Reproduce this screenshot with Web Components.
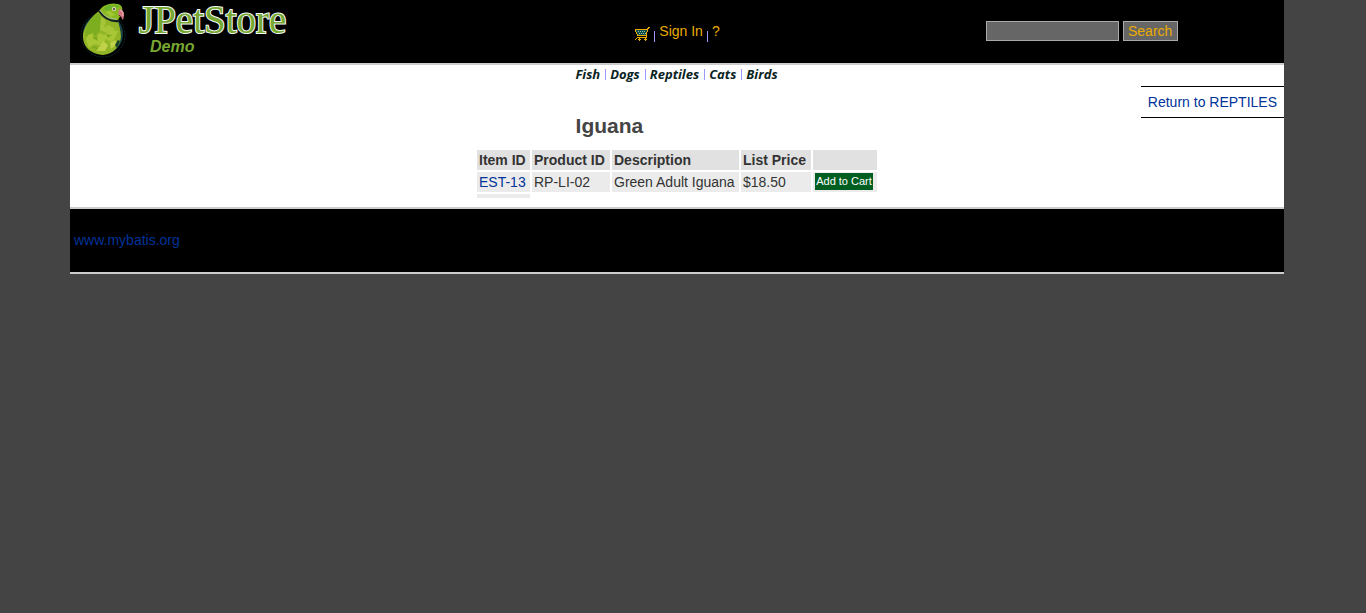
<!DOCTYPE html>
<html lang="en">
<head>
<meta charset="utf-8">
<title>JPetStore Demo</title>
<style>
  body { margin: 0; background: #444; color: #333; font: 14px/16px "Liberation Sans", Arial, sans-serif; }
</style>
</head>
<body>
<pet-page>
  <pet-header slot="header"></pet-header>
  <pet-quick-links></pet-quick-links>
  <pet-product name="Iguana"><a slot="back" href="#reptiles">Return to REPTILES</a></pet-product>
  <pet-footer slot="footer"></pet-footer>
</pet-page>

<script>
const define = (name, html) => {
  const template = document.createElement('template');
  template.innerHTML = html;
  customElements.define(name, class extends HTMLElement {
    constructor() {
      super();
      this.attachShadow({ mode: 'open' }).append(template.content.cloneNode(true));
    }
    connectedCallback() {
      const title = this.shadowRoot.querySelector('[data-name]');
      if (title) title.textContent = this.getAttribute('name');
    }
  });
};

define('pet-page', `
  <style>
    :host { display: block; margin: 0 82px 0 70px; }
    main { background: #fff; padding-bottom: 7px; }
  </style>
  <slot name="header"></slot>
  <main><slot></slot></main>
  <slot name="footer"></slot>`);

define('pet-logo', `
  <style>
    :host { display: block; }
    a { display: flex; text-decoration: none; color: #78a832; }
    svg { display: block; margin-right: 3px; }
    .words { display: flex; flex-direction: column; }
    .name { font: 39px/40px "Liberation Serif", serif; -webkit-text-stroke: 2px #f4fbfa; paint-order: stroke fill; }
    .demo { font: italic bold 16px/14px "Liberation Sans", sans-serif; padding-left: 11px; }
  </style>
  <a href="#home">
    <svg width="60" height="60" viewBox="0 0 60 60" aria-hidden="true">
      <circle cx="27" cy="35" r="22" fill="none" stroke="#0d2c30" stroke-dasharray="2 1"/>
      <circle cx="27" cy="34" r="19" fill="#08191b" stroke="#17434a" stroke-width="2"/>
      <path d="M23 11C15 17 9 25 7 34C6 46 14 54 27 55C38 54 44 46 45 37C45 30 43 25 42 21Z" fill="#91b526"/>
      <path d="M22 13C15 18 9 27 9 36L17 38C23 31 28 28 28 21Z" fill="#7dae20"/>
      <path d="M12 35L17 33L18 39L24 33L28 35L36 30L42 31L39 38L35 42L30 39L26 46L18 44L13 48L10 40Z" fill="#a9c735"/>
      <path d="M25 17L30 21L28 27L33 25L39 29L31 33L24 30Z" fill="#a6c538"/>
      <path d="M27 41L32 45L29 51L20 51L24 46ZM34 43L39 40L41 44L35 49Z" fill="#bfd249"/>
      <path d="M16 38L21 36L22 41ZM30 34L36 35L32 38ZM15 47L20 46L22 50Z" fill="#82aa1f"/>
      <path d="M39 45L42 40L44 41L41 48Z" fill="#173d27"/>
      <path d="M23 11C26 5 35 2 42 4C46 5 47 8 46 13L42 20C34 22 27 17 23 11Z" fill="#89b91e"/>
      <path d="M28 8L33 5L38 6L35 9L30 11ZM37 5L43 5L42 8Z" fill="#68b22c"/>
      <path d="M29 12L34 11L39 15L35 17Z" fill="#a0c934"/>
      <path d="M23 11C27 17 33 22 43 21" fill="none" stroke="#152025" stroke-width="2"/>
      <path d="M24 10C28 16 34 19 41 19" fill="none" stroke="#abc2a1"/>
      <path d="M43 9C48 9 49 15 47 20L44 16L42 15Z" fill="#cf7782"/>
      <path d="M44 10L47 12L47 16" fill="none" stroke="#f2b9b6"/>
      <path d="M43 15L46 18" stroke="#602d32"/>
      <circle cx="38" cy="9" r="2" fill="#e6d8c4"/><circle cx="38" cy="9" r="1" fill="#343b38"/>
    </svg>
    <span class="words"><span class="name">JPetStore</span><span class="demo">Demo</span></span>
  </a>`);

define('pet-header', `
  <style>
    :host { display: grid; grid-template-columns: 1fr 1fr 1fr; height: 63px; background: #000; border-bottom: 2px solid #ccc; }
    pet-logo { padding-left: 6px; }
    nav, form { display: flex; justify-content: center; align-items: flex-start; }
    nav { padding-top: 23px; gap: 4px; }
    form { padding-top: 21px; gap: 4px; }
    a { color: #eaac00; text-decoration: none; }
    .cart { padding-top: 3px; }
    svg { display: block; }
    i { width: 1px; height: 11px; margin-top: 8px; background: #99f; }
    input, button { box-sizing: border-box; height: 20px; margin: 0; border: 1px solid #aaa; border-radius: 0; background: #666; color: #eaac00; font: inherit; }
    input { width: 133px; padding: 1px 2px; }
    button { width: 55px; padding: 0; }
  </style>
  <pet-logo></pet-logo>
  <nav aria-label="Account">
    <a class="cart" href="#cart" aria-label="Cart">
      <svg width="16" height="16" viewBox="0 0 16 16" shape-rendering="crispEdges" aria-hidden="true">
        <path d="M2 4h11v5H4V8H3V6H2z" fill="#0f4a4c"/>
        <path d="M4 5h1v1H4zM6 5h1v1H6zM8 5h1v1H8zM10 5h1v1h-1zM5 7h1v1H5zM7 7h1v1H7zM9 7h1v1H9zM11 7h1v1h-1z" fill="#8cc4a4"/>
        <path d="M1 3h13v1H1zM14 1h2v1h-2zM13 2h2v1h-2zM13 3h1v3h-1zM1 4h1v2H1zM2 6h1v2H2zM12 6h1v5h-1zM3 8h1v1H3zM3 9h10v1H3zM3 11h10v1H3zM2 12h1v1H2zM1 13h1v1H1zM5 12h1v3H5zM4 13h3v1H4zM11 12h1v3h-1zM10 13h3v1h-3z" fill="#eaac00"/>
      </svg>
    </a>
    <i></i><a href="#signin">Sign In</a><i></i><a href="#help">?</a>
  </nav>
  <form role="search" onsubmit="return false">
    <input type="text" name="keyword" aria-label="Search keyword"><button type="submit">Search</button>
  </form>`);

define('pet-quick-links', `
  <style>
    :host { display: block; }
    nav { display: flex; justify-content: center; gap: 4px; height: 21px; font: italic bold 13px/18px "Open Sans", sans-serif; }
    a { color: #0a2424; text-decoration: none; padding-right: 1px; }
    i { width: 1px; height: 11px; margin-top: 4px; background: #99f; }
  </style>
  <nav aria-label="Categories">
    <a href="#fish">Fish</a><i></i><a href="#dogs">Dogs</a><i></i><a href="#reptiles">Reptiles</a><i></i><a href="#cats">Cats</a><i></i><a href="#birds">Birds</a>
  </nav>`);

define('pet-product', `
  <style>
    :host { display: block; }
    .top { display: grid; grid-template-columns: 1fr auto; align-items: start; height: 62px; }
    .back { border: 1px solid #000; border-width: 1px 0; padding: 7px; line-height: 16px; }
    ::slotted(a), a { color: #039; text-decoration: none; }
    h2 { margin: 28px 0 0; padding-left: 8px; text-align: center; font-size: 21px; line-height: 24px; color: #444; }
    table { margin: 0 auto; border-collapse: separate; border-spacing: 2px; table-layout: fixed; width: 404px; }
    th, td { height: 16px; padding: 2px; text-align: left; line-height: 16px; white-space: nowrap; }
    th { background: #e1e1e1; }
    td { background: #ebebeb; }
    .id { width: 49px; } .product { width: 74px; } .description { width: 123px; } .price { width: 66px; }
    .action { height: 18px; padding: 1px 2px; vertical-align: top; }
    .end td { height: 0; line-height: 0; }
    button { display: block; width: 58px; height: 17px; padding: 0; border: 0; background: #005e21; color: #fff; font: 11px/17px "Liberation Sans", Arial, sans-serif; }
  </style>
  <div class="top"><h2 data-name></h2><div class="back"><slot name="back"></slot></div></div>
  <table>
    <thead><tr><th class="id">Item ID</th><th class="product">Product ID</th><th class="description">Description</th><th class="price">List Price</th><th></th></tr></thead>
    <tbody>
      <tr><td><a href="#est-13">EST-13</a></td><td>RP-LI-02</td><td>Green Adult Iguana</td><td>$18.50</td><td class="action"><button type="button">Add to Cart</button></td></tr>
      <tr class="end"><td></td></tr>
    </tbody>
  </table>`);

define('pet-footer', `
  <style>
    :host { display: block; background: #000; border: 2px solid #ccc; border-width: 2px 0; padding: 23px 4px 24px; }
    a { color: #039; text-decoration: none; }
  </style>
  <a href="#mybatis">www.mybatis.org</a>`);
</script>
</body>
</html>
